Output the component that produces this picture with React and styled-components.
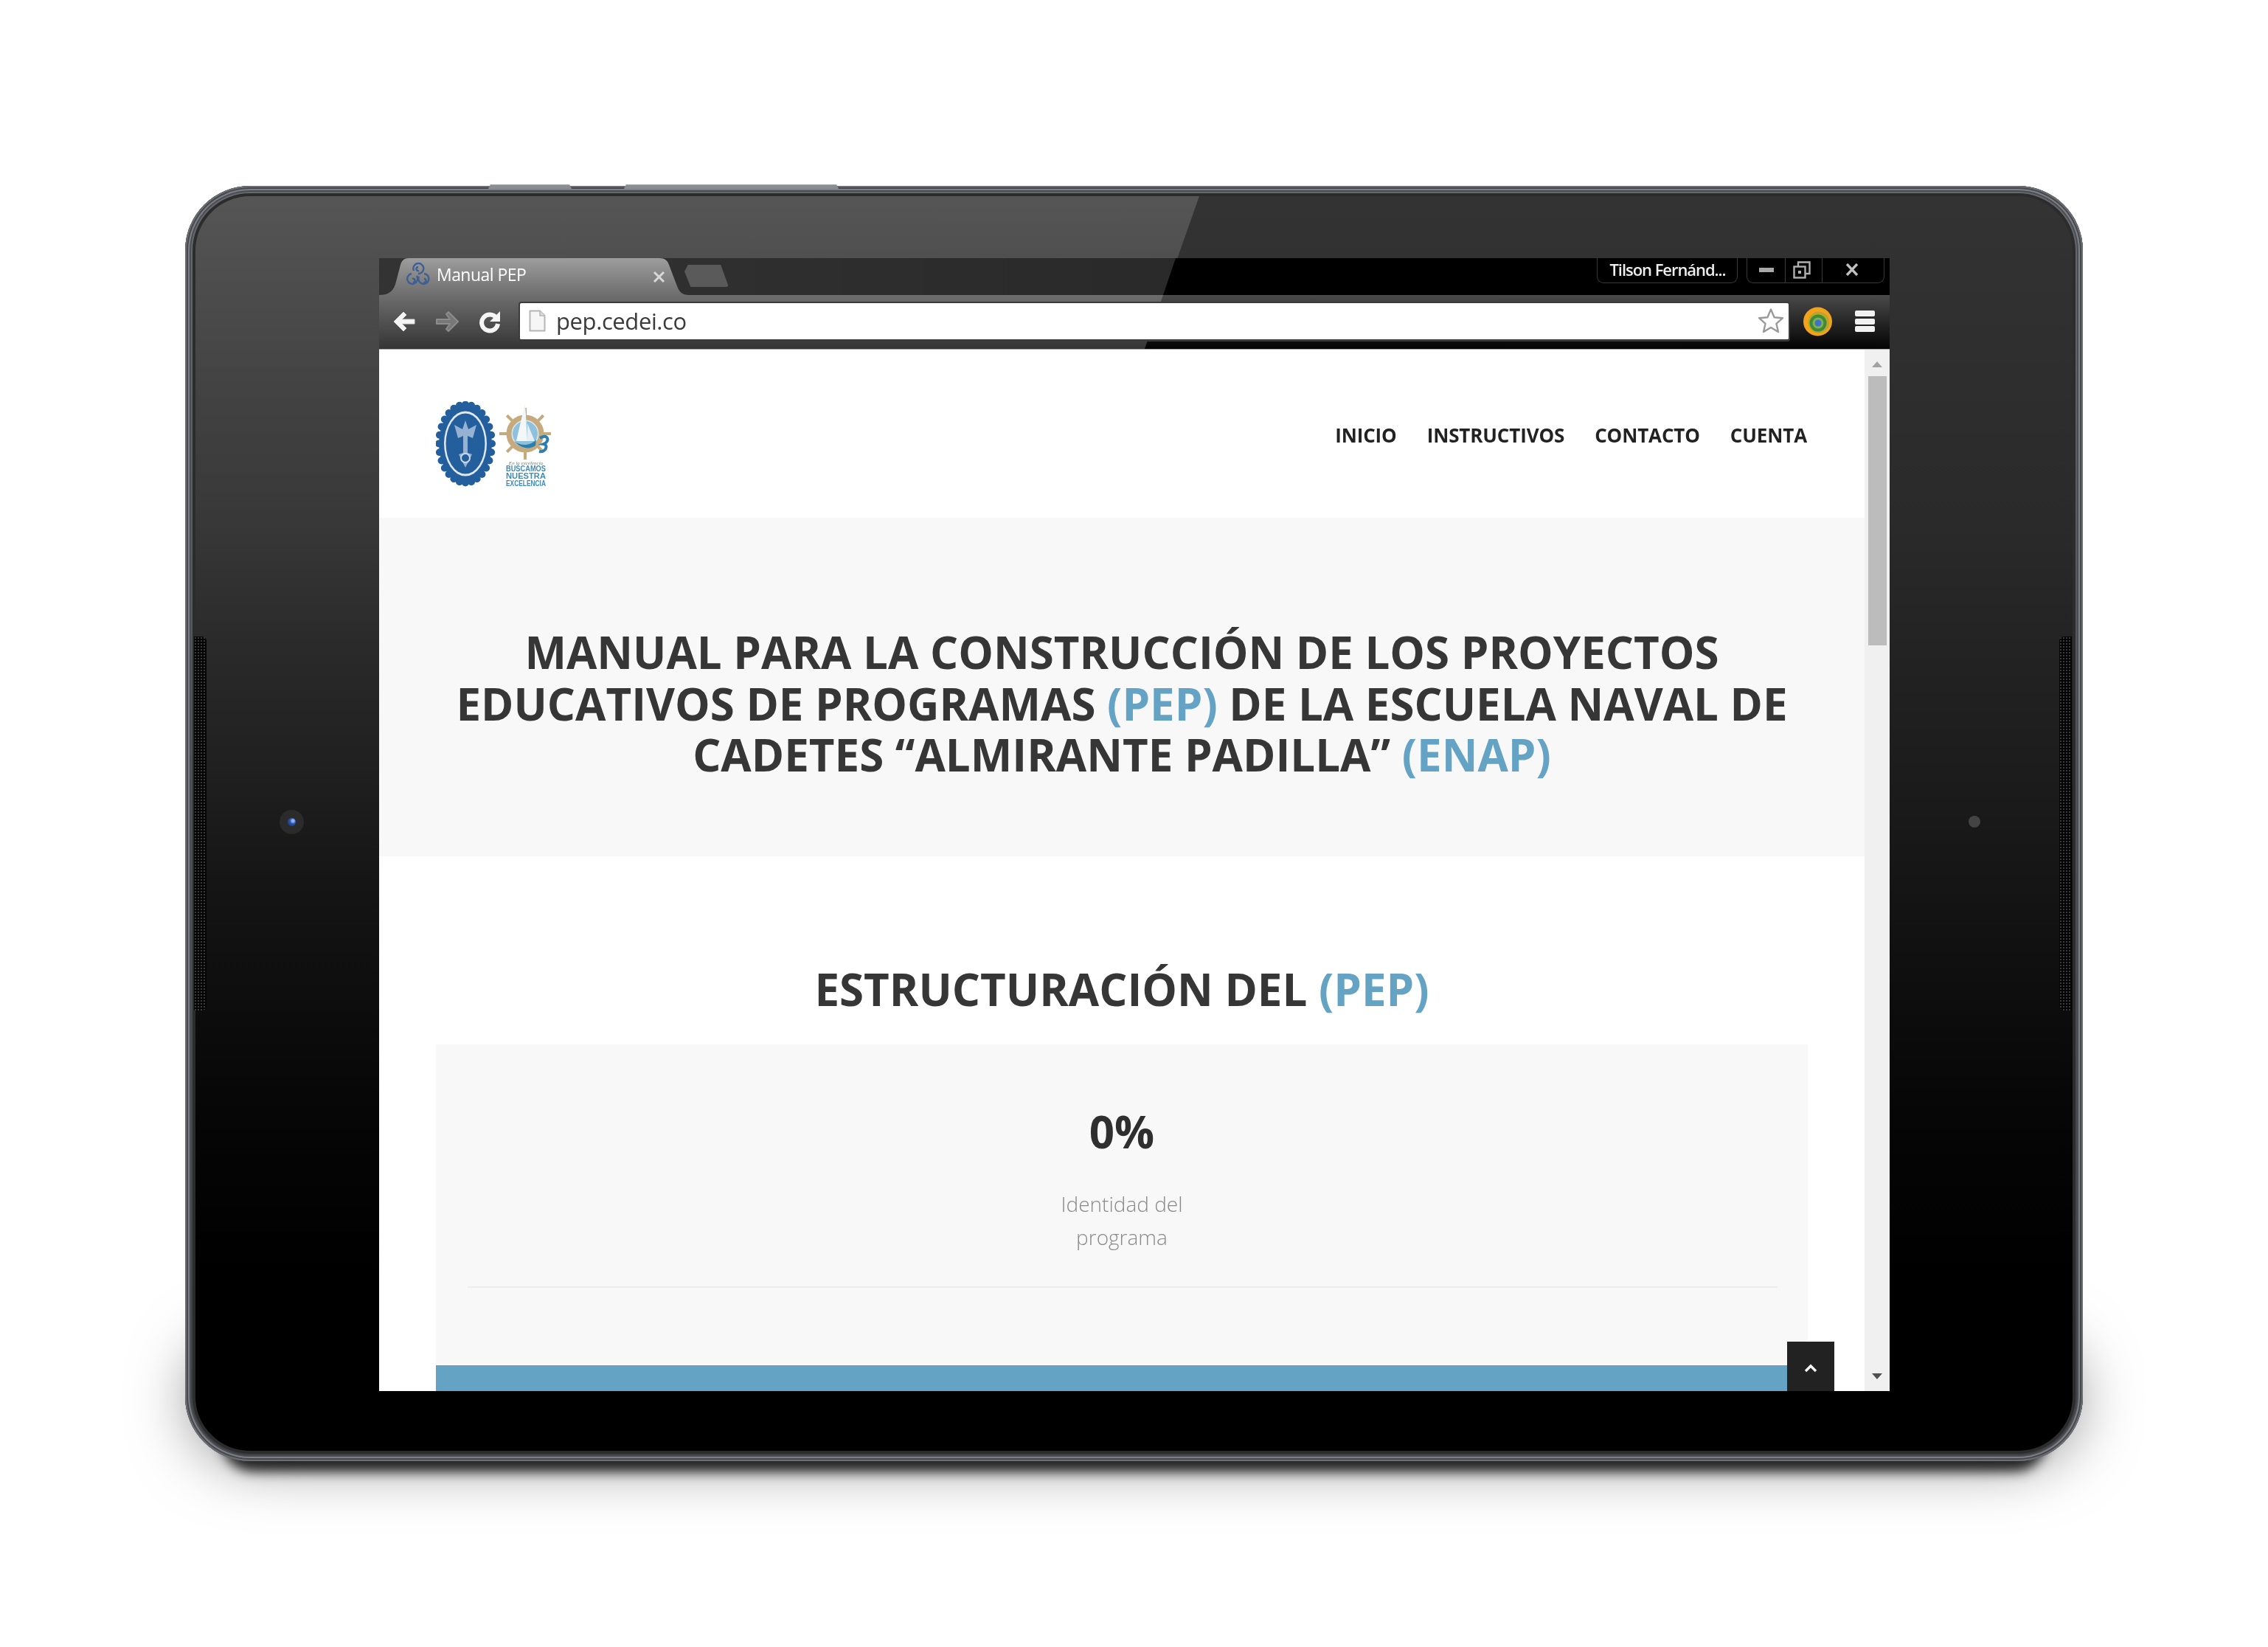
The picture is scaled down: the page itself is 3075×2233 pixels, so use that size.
import React from "react";
import styled, { createGlobalStyle } from "styled-components";

const GlobalStyle = createGlobalStyle`
  html, body {
    margin: 0;
    padding: 0;
    background: #fff;
  }
  * {
    box-sizing: border-box;
  }
`;

const Stage = styled.div`
  width: 3075px;
  height: 2233px;
  display: flex;
  align-items: center;
  justify-content: center;
  background: #fff;
  isolation: isolate;
  overflow: hidden;
  font-family: "Open Sans", "Noto Sans", sans-serif;
`;

const Device = styled.div`
  position: relative;
  width: 2573px;
  height: 1729px;
  padding: 10px;
  border-radius: 88px;
  background: linear-gradient(180deg, #67696e 0%, #4f5157 50%, #3c3e44 100%);
  box-shadow: inset 0 0 0 2px #6c6e74, inset 0 0 0 4px #47494f,
    inset 0 0 0 6px #7d7f85, inset 0 0 0 8px #4b4d53;

  &::after {
    content: "";
    position: absolute;
    z-index: -1;
    left: 50px;
    right: 50px;
    top: 1640px;
    bottom: 6px;
    border-radius: 60px;
    box-shadow: 0 20px 16px 0 rgba(0, 0, 0, 0.82),
      0 -36px 90px 34px rgba(0, 0, 0, 0.6);
  }
`;

const Bezel = styled.div`
  position: relative;
  height: 100%;
  border: 4px solid #2c2c2c;
  border-radius: 78px;
  padding: 84px 248px 81px 249px;
  overflow: hidden;
  background: linear-gradient(
    180deg,
    #333333 0%,
    #2a2a2a 26%,
    #191919 50%,
    #060606 73%,
    #000000 86%
  );

  &::before {
    content: "";
    position: absolute;
    inset: 0;
    background: linear-gradient(
      180deg,
      rgba(255, 255, 255, 0.17) 0%,
      rgba(255, 255, 255, 0.1) 15%,
      rgba(255, 255, 255, 0.03) 36%,
      rgba(255, 255, 255, 0) 55%
    );
    clip-path: polygon(0 0, 1361px 0, 760px 100%, 0 100%);
  }
`;

const Grille = styled.div`
  position: absolute;
  top: 611px;
  left: ${(p) => (p.$side === "left" ? "12px" : "2541px")};
  width: 17px;
  height: 507px;
  border-radius: ${(p) =>
    p.$side === "left" ? "0 6px 6px 0" : "6px 0 0 6px"};
  background-color: #050505;
  background-image: radial-gradient(circle, #3c3c3c 1px, transparent 1.3px);
  background-size: 4px 4px;
`;

const SideKey = styled.div`
  position: absolute;
  top: -2px;
  left: ${(p) => p.$left}px;
  width: ${(p) => p.$width}px;
  height: 6px;
  background: #8b8d91;
  border-top: 1px solid #a5a6a9;
  clip-path: polygon(3px 0, calc(100% - 3px) 0, 100% 100%, 0 100%);
`;

const Lens = styled.div`
  position: absolute;
  top: 846px;
  left: 128px;
  width: 33px;
  height: 33px;
  border-radius: 50%;
  background: #2b2b2b;
  display: flex;
  align-items: center;
  justify-content: center;

  &::after {
    content: "";
    width: 11px;
    height: 11px;
    border-radius: 50%;
    background: radial-gradient(circle at 65% 35%, #8fb4ff 0 15%, #2d52a8 40%, #1b2f66 100%);
  }
`;

const Sensor = styled.div`
  position: absolute;
  top: 854px;
  left: 2418px;
  width: 16px;
  height: 16px;
  border-radius: 50%;
  background: #444;
`;

const Screen = styled.div`
  position: relative;
  width: 2048px;
  height: 1536px;
  display: flex;
  flex-direction: column;
  overflow: hidden;
  background: #fff;
`;

const BrowserChrome = styled.div`
  flex: none;
  filter: blur(0.5px);
`;

const TabStrip = styled.div`
  position: relative;
  height: 50px;
  background: #000;
  display: flex;
  align-items: flex-start;

  &::before {
    content: "";
    position: absolute;
    inset: 0;
    background: linear-gradient(90deg, rgba(255, 255, 255, 0.2), rgba(255, 255, 255, 0.13));
    clip-path: polygon(0 0, 1080px 0, 1063px 100%, 0 100%);
  }
`;

const Tab = styled.div`
  position: relative;
  width: 420px;
  height: 50px;
  flex: none;
  display: flex;
  align-items: center;
  padding: 0 0 0 37px;
  gap: 9px;
  color: #fff;
  font-size: 23px;
  font-weight: 500;
  letter-spacing: -0.55px;

  svg.shape {
    position: absolute;
    inset: 0;
  }
  svg.icon,
  span {
    position: relative;
  }
  span {
    margin-top: -6px;
  }
  svg.icon {
    margin-top: -6px;
  }
  svg.close {
    position: absolute;
    left: 371px;
    top: 17px;
  }
`;

const NewTab = styled.div`
  position: relative;
  width: 60px;
  height: 30px;
  margin: 9px 0 0 -6px;
  background: #5a5a5a;
  clip-path: polygon(8% 0, 82% 0, 100% 100%, 14% 100%, 0 30%);
  border-radius: 4px;
`;

const WindowArea = styled.div`
  position: relative;
  margin-left: auto;
  margin-right: 7px;
  display: flex;
  gap: 12px;
`;

const CaptionBox = styled.div`
  height: 34px;
  display: flex;
  align-items: center;
  background: #000;
  border: 1px solid #3a3a3a;
  border-top: none;
  border-radius: 0 0 9px 9px;
`;

const Profile = styled(CaptionBox)`
  width: 191px;
  padding: 0 0 3px 1px;
  justify-content: center;
  color: #eee;
  font-size: 22px;
  font-weight: 600;
  letter-spacing: -1.05px;
  white-space: nowrap;
`;

const CaptionButton = styled.div`
  width: ${(p) => p.$width}px;
  height: 100%;
  padding: 0 ${(p) => p.$inset || 0}px 2px 0;
  display: flex;
  align-items: center;
  justify-content: center;
  & + & {
    border-left: 1px solid #3a3a3a;
  }
`;

const Toolbar = styled.div`
  position: relative;
  height: 74px;
  display: flex;
  align-items: center;
  padding: 0 20px 2px 18px;
  background: linear-gradient(180deg, #4a4a4a 0%, #262626 50%, #030303 100%);
  border-bottom: 1px solid #a8a8a8;

  &::before {
    content: "";
    position: absolute;
    inset: 0;
    background: rgba(255, 255, 255, 0.2);
    clip-path: polygon(0 0, 1063px 0, 1038px 100%, 0 100%);
  }

  > * {
    position: relative;
  }
`;

const NavIcons = styled.div`
  display: flex;
  align-items: center;
  gap: 26px;
  width: 171px;
  flex: none;
`;

const Omnibox = styled.div`
  flex: none;
  width: 1724px;
  height: 54px;
  background: #fff;
  border: 2px solid #3b3b3b;
  border-bottom-width: 3px;
  border-radius: 4px;
  display: flex;
  align-items: center;
  padding: 0 6px 0 12px;
  gap: 14px;
  color: #3a3a3a;
  font-size: 31px;
  letter-spacing: -0.4px;

  span {
    flex: 1;
  }
`;

const Extensions = styled.div`
  display: flex;
  align-items: center;
  gap: 31px;
  margin-left: 18px;
`;

const MenuBars = styled.div`
  width: 27px;
  height: 29px;
  display: flex;
  flex-direction: column;
  justify-content: space-between;

  i {
    display: block;
    height: 8px;
    border-radius: 2px;
    background: #f2f2f2;
  }
`;

const PageView = styled.div`
  position: relative;
  flex: 1;
  min-height: 0;
  display: flex;
  overflow: hidden;
`;

const Main = styled.main`
  flex: 1;
  min-width: 0;
  filter: blur(0.5px);
`;

const Header = styled.header`
  height: 228px;
  display: flex;
  align-items: center;
  justify-content: space-between;
  padding: 0 78px 0 77px;
`;

const Logo = styled.svg`
  margin-top: 34px;
  flex: none;
  filter: blur(0.7px);
`;

const Nav = styled.nav`
  display: flex;
  gap: 41px;
  padding-top: 4px;
`;

const NavLink = styled.a`
  color: #222;
  font-size: 26px;
  font-weight: 700;
  letter-spacing: -0.13px;
`;

const Hero = styled.section`
  background: #f8f8f8;
  padding: 148px 77px 102.5px;
`;

const Heading = styled.h1`
  margin: 0;
  text-align: center;
  color: #363636;
  font-size: 60px;
  font-weight: 700;
  line-height: 69.5px;
`;

const Accent = styled.span`
  color: #65a3c4;
`;

const Section = styled.section`
  padding: 146px 77px 0;
`;

const Panel = styled.div`
  margin-top: 39.5px;
  background: #f8f8f8;
  padding-top: 78px;
`;

const Percent = styled.div`
  text-align: center;
  color: #2f2f2f;
  font-size: 60px;
  font-weight: 700;
  line-height: 80px;
`;

const Label = styled.div`
  width: 240px;
  margin: 36px auto 0;
  text-align: center;
  color: #8a8a8a;
  font-size: 28px;
  font-weight: 300;
  line-height: 45px;
`;

const Divider = styled.hr`
  margin: 44px 41px 0 43px;
  border: none;
  height: 2px;
  background: #ededed;
`;

const ProgressBar = styled.div`
  margin-top: 103px;
  height: 60px;
  background: #65a3c4;
  border-top: 2px solid #fff;
`;

const Scrollbar = styled.div`
  flex: none;
  width: 34px;
  background: #f0f0f0;
  padding-top: 16px;
  display: flex;
  flex-direction: column;
  align-items: center;
`;

const ScrollArrow = styled.div`
  width: 0;
  height: 0;
  border-left: 7px solid transparent;
  border-right: 7px solid transparent;
  ${(p) =>
    p.$down
      ? "border-top: 8px solid #505050; margin-top: auto; margin-bottom: 16px;"
      : "border-bottom: 8px solid #a3a3a3;"}
`;

const ScrollThumb = styled.div`
  width: 25px;
  height: 365px;
  margin-top: 12px;
  background: #bcbcbc;
`;

const ToTop = styled.a`
  position: absolute;
  right: 75px;
  bottom: 0;
  width: 64px;
  height: 67px;
  padding-top: 29px;
  background: #222;
  display: flex;
  align-items: flex-start;
  justify-content: center;
`;

const seal = Array.from({ length: 28 }, (_, i) => {
  const a = (i / 28) * Math.PI * 2;
  return { x: 40 + 36 * Math.cos(a), y: 57.5 + 53 * Math.sin(a) };
});

const spokes = [0, 45, 90, 135, 180, 225, 270, 315];

const SiteLogo = () => (
  <Logo width="160" height="122" viewBox="0 0 160 122">
    {seal.map((p, i) => (
      <circle key={i} cx={p.x} cy={p.y} r="5" fill="#245f9d" />
    ))}
    <ellipse cx="40" cy="57.5" rx="36" ry="53" fill="#245f9d" />
    <ellipse cx="40" cy="57.5" rx="29" ry="44" fill="#dfe8f2" />
    <ellipse cx="40" cy="57.5" rx="26.5" ry="41" fill="#245f9d" />
    <path
      d="M40 26 L44 38 L55 32 L50 50 L43 47 L43 70 L49 72 L40 90 L31 72 L37 70 L37 47 L30 50 L25 32 L36 38 Z"
      fill="#a9c1dc"
      opacity="0.85"
    />
    <circle cx="40" cy="77" r="6" fill="#245f9d" stroke="#c9d8ea" strokeWidth="2" />
    <g transform="translate(121 44)">
      {spokes.map((a) => (
        <rect key={a} x="-2" y="-35" width="4" height="13" fill="#c4aa7c" transform={`rotate(${a})`} />
      ))}
      <circle r="22" fill="#dce8f0" stroke="#c4aa7c" strokeWidth="7" />
      <circle r="17" fill="#8fc0dc" />
      <path d="M0 -42 L3 10 L-12 10 Z" fill="#f4f7fa" />
      <path d="M3 -14 L13 10 L3 10 Z" fill="#e7eef4" />
      <path d="M-15 10 C-6 17 7 17 15 8 L14 16 C6 22 -7 20 -15 10 Z" fill="#2b7fae" />
      <path d="M20 6 C30 -1 35 10 25 14 C32 15 28 26 19 24" fill="none" stroke="#2b7fae" strokeWidth="4" />
    </g>
    <text x="122" y="86" textAnchor="middle" fontSize="7" fontStyle="italic" fill="#587" fontFamily="Liberation Serif, serif">
      En la excelencia
    </text>
    <g fontFamily="Liberation Sans, sans-serif" fontSize="11" fontWeight="700" fill="#3f8ab5">
      <text x="95" y="95" textLength="54" lengthAdjust="spacingAndGlyphs">BUSCAMOS</text>
      <text x="95" y="105" textLength="54" lengthAdjust="spacingAndGlyphs">NUESTRA</text>
      <text x="95" y="115" textLength="54" lengthAdjust="spacingAndGlyphs">EXCELENCIA</text>
    </g>
  </Logo>
);

const Triskele = () => (
  <svg className="icon" width="32" height="32" viewBox="0 0 32 32" fill="none" stroke="#3e5f96" strokeWidth="2.4">
    <path d="M16 15a7 7 0 1 0-6-4M16 6a2.6 2.6 0 1 0 1 5" />
    <path d="M14 18a7 7 0 1 1-7-3M9 27a2.6 2.6 0 1 0-1-5" />
    <path d="M17 19a7 7 0 1 0 7-4M23 27a2.6 2.6 0 1 0 1-5" />
  </svg>
);

const BackIcon = () => (
  <svg width="32" height="30" viewBox="0 0 32 30">
    <path
      d="M15 2 L2 15 L15 28 L19 24 L13 18 L30 18 L30 12 L13 12 L19 6 Z"
      fill="#f5f5f5"
      stroke="#ddd"
      strokeLinejoin="round"
    />
  </svg>
);

const ForwardIcon = () => (
  <svg width="33" height="32" viewBox="0 0 33 32">
    <path
      d="M18 3 L31 16 L18 29 L15 26 L20 19 L2 19 L2 13 L20 13 L15 6 Z"
      fill="#777"
      stroke="#8c8c8c"
      strokeWidth="2"
      strokeLinejoin="round"
    />
  </svg>
);

const ReloadIcon = () => (
  <svg width="30" height="34" viewBox="0 0 30 34">
    <path d="M24 12 A11 11 0 1 0 26 20" fill="none" stroke="#f5f5f5" strokeWidth="6" />
    <path d="M29 3 L29 17 L15 17 Z" fill="#f5f5f5" />
  </svg>
);

const PageIcon = () => (
  <svg width="23" height="30" viewBox="0 0 23 30">
    <path d="M1.5 1.5 H15 L21.5 8 V28.5 H1.5 Z" fill="#f6f6f6" stroke="#b5b5b5" strokeWidth="2" />
    <path d="M15 1.5 V8 H21.5" fill="#ddd" stroke="#b5b5b5" strokeWidth="1.5" />
  </svg>
);

const StarIcon = () => (
  <svg width="36" height="36" viewBox="0 0 36 36">
    <path
      d="M18 2.5 L22.6 13.2 L34 14.2 L25.4 21.8 L28 33 L18 27 L8 33 L10.6 21.8 L2 14.2 L13.4 13.2 Z"
      fill="#fff"
      stroke="#9a9a9a"
      strokeWidth="2.4"
      strokeLinejoin="round"
    />
  </svg>
);

const ExtensionIcon = () => (
  <svg width="39" height="40" viewBox="0 0 39 40">
    <circle cx="19.5" cy="20" r="19.5" fill="#f3a21c" />
    <circle cx="21" cy="21" r="14.5" fill="#b8a72c" />
    <circle cx="20" cy="22" r="11.5" fill="#3d8b36" />
    <circle cx="20" cy="22" r="7.5" fill="#7fb04d" />
    <circle cx="20" cy="22" r="4.5" fill="#3f70d0" />
  </svg>
);

const App = () => (
  <Stage>
    <GlobalStyle />
    <Device>
      <SideKey $left={411} $width={113} />
      <SideKey $left={595} $width={291} />
      <Bezel>
        <Screen>
          <BrowserChrome>
            <TabStrip>
              <Tab>
                <svg className="shape" width="420" height="50" viewBox="0 0 420 50">
                  <defs>
                    <linearGradient id="tabFill" x1="0" y1="0" x2="0" y2="1">
                      <stop offset="0" stopColor="#9d9d9d" />
                      <stop offset="1" stopColor="#6e6e6e" />
                    </linearGradient>
                  </defs>
                  <path
                    d="M0 50 C14 50 20 44 23 32 L29 9 C31 3 34 0 40 0 L380 0 C387 0 391 3 393 9 L404 38 C407 46 411 50 420 50 Z"
                    fill="url(#tabFill)"
                  />
                </svg>
                <Triskele />
                <span>Manual PEP</span>
                <svg className="close" width="17" height="17" viewBox="0 0 17 17">
                  <path d="M2 2 L15 15 M15 2 L2 15" stroke="#d8d8d8" strokeWidth="3" />
                </svg>
              </Tab>
              <NewTab />
              <WindowArea>
                <Profile>Tilson Fernánd...</Profile>
                <CaptionBox>
                  <CaptionButton $width={51}>
                    <svg width="20" height="6" viewBox="0 0 20 6">
                      <rect width="20" height="6" fill="#a8a8a8" />
                    </svg>
                  </CaptionButton>
                  <CaptionButton $width={50} $inset={5}>
                    <svg width="24" height="24" viewBox="0 0 24 24" fill="none" stroke="#b0b0b0" strokeWidth="2.4">
                      <rect x="1.5" y="7.5" width="15" height="15" />
                      <path d="M7 7 V1.5 H22.5 V17 H17" />
                      <rect x="7" y="13" width="4" height="4" fill="#b0b0b0" stroke="none" />
                    </svg>
                  </CaptionButton>
                  <CaptionButton $width={84} $inset={4}>
                    <svg width="18" height="17" viewBox="0 0 18 17">
                      <path d="M2 1 L16 16 M16 1 L2 16" stroke="#c0c0c0" strokeWidth="3.4" />
                    </svg>
                  </CaptionButton>
                </CaptionBox>
              </WindowArea>
            </TabStrip>
            <Toolbar>
              <NavIcons>
                <BackIcon />
                <ForwardIcon />
                <ReloadIcon />
              </NavIcons>
              <Omnibox>
                <PageIcon />
                <span>pep.cedei.co</span>
                <StarIcon />
              </Omnibox>
              <Extensions>
                <ExtensionIcon />
                <MenuBars>
                  <i />
                  <i />
                  <i />
                </MenuBars>
              </Extensions>
            </Toolbar>
          </BrowserChrome>
          <PageView>
            <Main>
              <Header>
                <SiteLogo />
                <Nav>
                  <NavLink>INICIO</NavLink>
                  <NavLink>INSTRUCTIVOS</NavLink>
                  <NavLink>CONTACTO</NavLink>
                  <NavLink>CUENTA</NavLink>
                </Nav>
              </Header>
              <Hero>
                <Heading>
                  MANUAL PARA LA CONSTRUCCIÓN DE LOS PROYECTOS EDUCATIVOS DE PROGRAMAS{" "}
                  <Accent>(PEP)</Accent> DE LA ESCUELA NAVAL DE CADETES “ALMIRANTE PADILLA”{" "}
                  <Accent>(ENAP)</Accent>
                </Heading>
              </Hero>
              <Section>
                <Heading as="h2">
                  ESTRUCTURACIÓN DEL <Accent>(PEP)</Accent>
                </Heading>
                <Panel>
                  <Percent>0%</Percent>
                  <Label>Identidad del programa</Label>
                  <Divider />
                  <ProgressBar />
                </Panel>
              </Section>
            </Main>
            <Scrollbar>
              <ScrollArrow />
              <ScrollThumb />
              <ScrollArrow $down />
            </Scrollbar>
            <ToTop>
              <svg width="18" height="14" viewBox="0 0 18 14">
                <path d="M2 11 L9 4 L16 11" fill="none" stroke="#f4f4f4" strokeWidth="3.4" />
              </svg>
            </ToTop>
          </PageView>
        </Screen>
      </Bezel>
      <Grille $side="left" />
      <Grille $side="right" />
      <Lens />
      <Sensor />
    </Device>
  </Stage>
);

export default App;
